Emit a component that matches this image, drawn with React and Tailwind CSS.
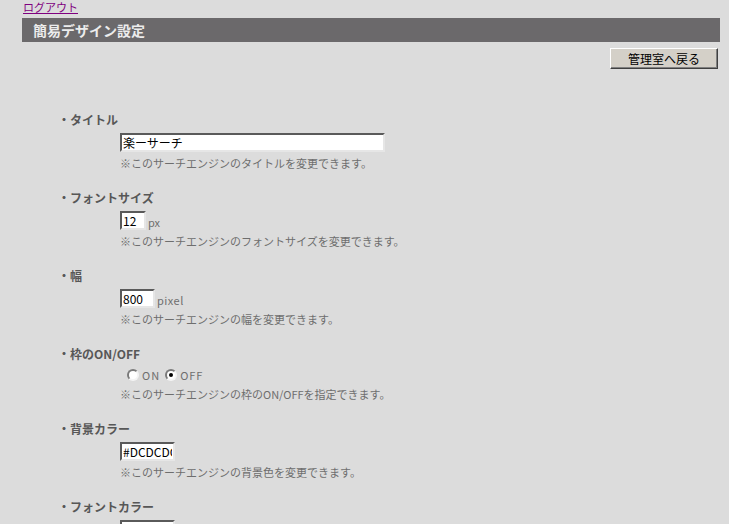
import React from "react";

const jp = { fontFamily: '"Noto Sans CJK JP", "Liberation Sans", sans-serif' };

const inputCls =
  "h-[19px] bg-white border-2 border-t-[#5a5a5a] border-l-[#5a5a5a] border-b-[#e6e6e6] border-r-[#e6e6e6] px-[1px] text-[12px] leading-[15px] text-black outline-none";

const Label = ({ children }) => (
  <div className="pl-[36px] text-[12px] leading-[14px] font-bold text-[#575757]">
    ・{children}
  </div>
);

const Help = ({ children }) => (
  <div className="pl-[98px] mt-1 text-[11px] leading-[14px] text-[#6e6e6e]">
    {children}
  </div>
);

const Radio = ({ checked }) => (
  <span className="inline-flex items-center justify-center w-[12px] h-[12px] rounded-full bg-white border-2 border-t-[#7a7a7a] border-l-[#7a7a7a] border-b-[#f4f4f4] border-r-[#f4f4f4]">
    {checked && <span className="w-[4px] h-[4px] rounded-full bg-black" />}
  </span>
);

const Section = ({ label, help, rowH = "h-[19px]", children }) => (
  <div className="mb-[21px]">
    <Label>{label}</Label>
    <div className={`pl-[98px] mt-[6px] ${rowH} flex items-center`}>{children}</div>
    {help && <Help>{help}</Help>}
  </div>
);

const App = () => {
  return (
    <div className="h-[524px] bg-[#dcdcdc] overflow-hidden" style={jp}>
      <div className="pl-[23px] pt-[1px] h-[14px]">
        <a href="#" className="block w-fit text-[11px] leading-[12px] text-[#800080] underline">
          ログアウト
        </a>
      </div>
      <div className="ml-[22px] w-[698px] mt-1">
        <div className="h-[24px] bg-[#6b696b] pl-[11px] flex items-center text-[14px] font-bold text-[#ececec]">
          簡易デザイン設定
        </div>
        <div className="flex justify-end pr-[2px] mt-[6px]">
          <button className="w-[108px] h-[21px] bg-[#d4d0c8] border border-t-white border-l-white border-b-[#404040] border-r-[#404040] shadow-[inset_-1px_-1px_0_#808080] text-[12px] leading-[14px] text-black">
            管理室へ戻る
          </button>
        </div>

        <div className="mt-[44px]">
          <Section label="タイトル" help="※このサーチエンジンのタイトルを変更できます。">
            <input className={`${inputCls} w-[265px]`} defaultValue="楽ーサーチ" />
          </Section>
          <Section label="フォントサイズ" help="※このサーチエンジンのフォントサイズを変更できます。">
            <input className={`${inputCls} w-[26px]`} defaultValue="12" />
            <span className="ml-[2px] text-[11px] text-[#6e6e6e] mt-[3px]">px</span>
          </Section>
          <Section label="幅" help="※このサーチエンジンの幅を変更できます。">
            <input className={`${inputCls} w-[35px]`} defaultValue="800" />
            <span className="ml-[2px] text-[11px] text-[#6e6e6e] mt-[3px] tracking-[0.5px]">pixel</span>
          </Section>
          <Section label="枠のON/OFF" rowH="h-[16px]" help="※このサーチエンジンの枠のON/OFFを指定できます。">
            <div className="pl-[7px] flex items-center text-[11px] text-[#6e6e6e] tracking-[1px]">
              <Radio />
              <span className="ml-[3px] mr-[5px]">ON</span>
              <Radio checked />
              <span className="ml-[3px]">OFF</span>
            </div>
          </Section>
          <Section label="背景カラー" help="※このサーチエンジンの背景色を変更できます。">
            <input className={`${inputCls} w-[55px]`} defaultValue="#DCDCDC" />
          </Section>
          <Section label="フォントカラー">
            <input className={`${inputCls} w-[55px]`} defaultValue="#333333" />
          </Section>
        </div>
      </div>
    </div>
  );
};

export default App;
